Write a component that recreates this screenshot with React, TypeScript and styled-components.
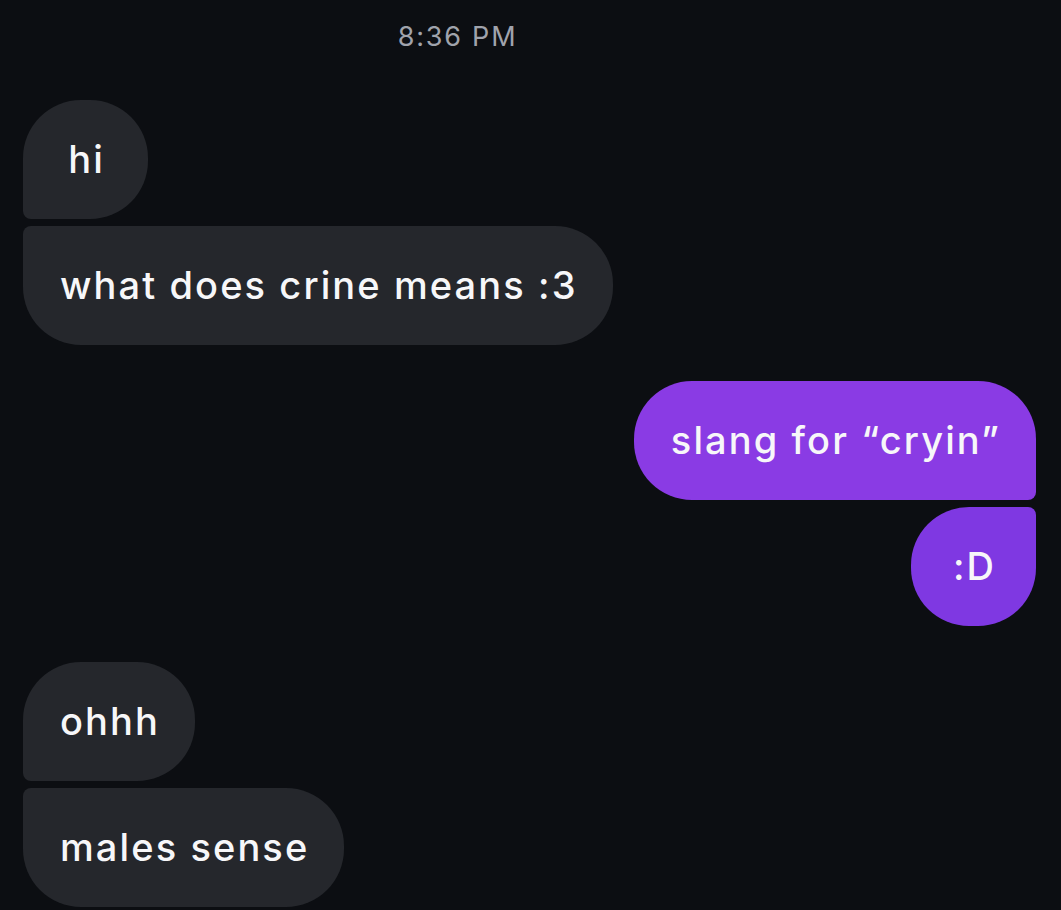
import React from "react";
import styled, { createGlobalStyle, css } from "styled-components";

const Global = createGlobalStyle`
  html, body { margin: 0; padding: 0; background: #0c0e12; }
  body { font-family: Inter, "Noto Sans", "Liberation Sans", sans-serif; -webkit-font-smoothing: antialiased; }
`;

const Screen = styled.div`
  width: 1061px;
  height: 910px;
  overflow: hidden;
  background: #0c0e12;
  display: flex;
  flex-direction: column;
  padding: 20px 25px 0 23px;
  box-sizing: border-box;
`;

const Timestamp = styled.div`
  display: flex;
  justify-content: center;
  padding-right: 144px;
  font-size: 27px;
  line-height: 34px;
  color: #a0a3ac;
  font-weight: 400;
  letter-spacing: 1.8px;
`;

const Group = styled.div<{ $out?: boolean; $first?: boolean }>`
  display: flex;
  flex-direction: column;
  align-items: ${(p) => (p.$out ? "flex-end" : "flex-start")};
  gap: 7px;
  margin-top: ${(p) => (p.$first ? "46px" : "36px")};
`;

type Pos = "first" | "last";

const Bubble = styled.div<{ $out?: boolean; $pos: Pos }>`
  box-sizing: border-box;
  min-width: 125px;
  text-align: center;
  padding: 37px 35px 37px 37px;
  font-size: 38px;
  line-height: 45px;
  font-weight: 500;
  letter-spacing: 2.1px;
  color: #f7f7f9;
  white-space: nowrap;
  border-radius: 58px;
  background: #25272c;
  ${(p) =>
    p.$out
      ? css`
          background: ${p.$pos === "first" ? "#8a3be4" : "#7f38e2"};
          ${p.$pos === "first" ? "border-bottom-right-radius: 8px;" : "border-top-right-radius: 8px;"}
        `
      : css`
          ${p.$pos === "first" ? "border-bottom-left-radius: 8px;" : "border-top-left-radius: 8px;"}
        `}
`;

type Msg = { text: string; out?: boolean };

const groups: Msg[][] = [
  [{ text: "hi" }, { text: "what does crine means :3" }],
  [{ text: "slang for \u201Ccryin\u201D", out: true }, { text: ":D", out: true }],
  [{ text: "ohhh" }, { text: "males sense" }],
];

export default function App() {
  return (
    <>
      <Global />
      <Screen>
        <Timestamp>8:36 PM</Timestamp>
        {groups.map((g, i) => (
          <Group key={i} $out={g[0].out} $first={i === 0}>
            {g.map((m, j) => (
              <Bubble key={j} $out={m.out} $pos={j === 0 ? "first" : "last"}>
                {m.text}
              </Bubble>
            ))}
          </Group>
        ))}
      </Screen>
    </>
  );
}
